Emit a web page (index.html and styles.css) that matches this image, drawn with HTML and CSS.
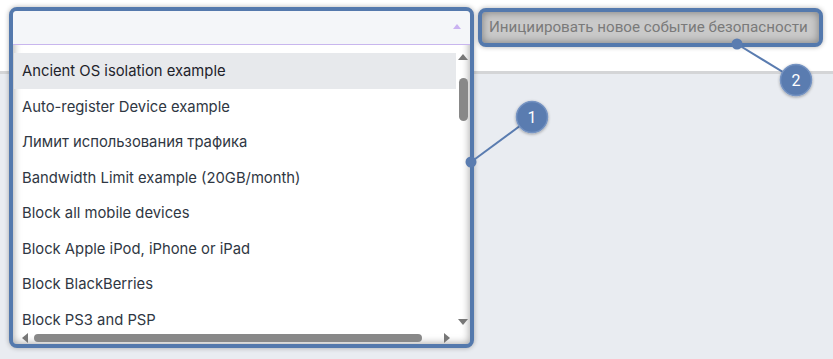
FILE: index.html
```html
<!DOCTYPE html>
<html lang="ru">
<head>
  <meta charset="UTF-8" />
  <title>Security events</title>
  <link rel="stylesheet" href="styles.css">
</head>
<body>
  <div class="page">
    <!-- Верхняя полоса -->
    <div class="band"></div>

    <!-- Выпадающий список политик -->
    <div class="dropdown highlight">
      <div class="dd-head">
        <span class="dd-caret"></span>
      </div>
      <div class="dd-body">
        <div class="dd-main">
          <ul class="dd-list">
            <li class="active">Ancient OS isolation example</li>
            <li>Auto-register Device example</li>
            <li>Лимит использования трафика</li>
            <li>Bandwidth Limit example (20GB/month)</li>
            <li>Block all mobile devices</li>
            <li>Block Apple iPod, iPhone or iPad</li>
            <li>Block BlackBerries</li>
            <li>Block PS3 and PSP</li>
          </ul>
          <div class="vscroll">
            <span class="arr up"></span>
            <span class="vthumb"></span>
            <span class="arr down"></span>
          </div>
        </div>
        <div class="hscroll">
          <span class="arr left"></span>
          <span class="hthumb"></span>
          <span class="arr right"></span>
        </div>
      </div>
    </div>

    <!-- Кнопка -->
    <div class="trigger highlight">Инициировать новое событие безопасности</div>

    <!-- Выноски -->
    <svg class="callouts" width="833" height="359" viewBox="0 0 833 359">
      <defs>
        <filter id="sh" x="-50%" y="-50%" width="200%" height="200%">
          <feDropShadow dx="0" dy="1" stdDeviation="1.5" flood-color="#000" flood-opacity="0.35"/>
        </filter>
      </defs>
      <line x1="471" y1="162" x2="532" y2="117" stroke="#5a7cb0" stroke-width="2"/>
      <circle cx="471" cy="162" r="5.5" fill="#5a7cb0"/>
      <circle cx="532" cy="117" r="15.5" fill="#5a7cb0" stroke="#7593c2" stroke-width="1.5" filter="url(#sh)"/>
      <text x="532" y="123" class="num">1</text>

      <line x1="737" y1="44" x2="796" y2="80" stroke="#5a7cb0" stroke-width="2"/>
      <circle cx="737" cy="44" r="5.5" fill="#5a7cb0"/>
      <circle cx="796" cy="80" r="15.5" fill="#5a7cb0" stroke="#7593c2" stroke-width="1.5" filter="url(#sh)"/>
      <text x="796" y="86" class="num">2</text>
    </svg>
  </div>
</body>
</html>
```

FILE: styles.css
```css
body, html {
  margin: 0;
  padding: 0;
  background: #e9ecf1;
  font-family: 'Inter', 'Noto Sans', sans-serif;
  overflow: hidden;
}

.page {
  position: relative;
  width: 833px;
  height: 359px;
}

.band {
  height: 71px;
  background: #ffffff;
  border-bottom: 3px solid #d4d5d7;
}

/* Рамка подсветки */
.highlight {
  position: absolute;
  border: 4px solid #5479ad;
  border-radius: 8px;
  box-shadow: 0 0 5px rgba(0, 0, 0, 0.3), inset 0 0 8px rgba(0, 0, 0, 0.4);
}

/* Выпадающий список */
.dropdown {
  left: 9px;
  top: 7px;
  width: 457px;
  height: 333px;
  background: #fff;
  display: flex;
  flex-direction: column;
  overflow: hidden;
}

.dd-head {
  height: 33px;
  background: #f4f6f9;
  border-bottom: 1px solid #c8b6ee;
  display: flex;
  justify-content: flex-end;
  align-items: center;
  padding-right: 9px;
  flex-shrink: 0;
}

.dd-caret {
  width: 0;
  height: 0;
  border-left: 4.5px solid transparent;
  border-right: 4.5px solid transparent;
  border-bottom: 5px solid #c9b2f1;
  margin-top: -2px;
}

.dd-body {
  flex: 1;
  display: flex;
  flex-direction: column;
  min-height: 0;
}

.dd-main {
  flex: 1;
  display: flex;
  min-height: 0;
}

.dd-list {
  list-style: none;
  margin: 0;
  padding: 8px 0 0 1px;
  flex: 1;
  overflow: hidden;
}

.dd-list li {
  height: 35.5px;
  line-height: 37px;
  padding-left: 8px;
  font-size: 14.8px;
  color: #2f3743;
  white-space: nowrap;
}

.dd-list li.active {
  background: #e7e9ec;
  color: #1e232b;
}

/* Полосы прокрутки */
.vscroll {
  width: 14px;
  display: flex;
  flex-direction: column;
  align-items: center;
  padding-top: 9px;
  padding-bottom: 6px;
}

.vthumb {
  width: 9px;
  height: 43px;
  border-radius: 4.5px;
  background: #888;
  margin-top: 18px;
}

.vscroll .down {
  margin-top: auto;
}

.hscroll {
  height: 13px;
  display: flex;
  align-items: center;
  padding: 0 20px 0 9px;
  flex-shrink: 0;
}

.hthumb {
  width: 388px;
  height: 8px;
  border-radius: 4px;
  background: #888;
  margin-left: 6px;
}

.hscroll .right {
  margin-left: auto;
}

.arr {
  width: 0;
  height: 0;
  display: block;
}

.arr.up {
  border-left: 5px solid transparent;
  border-right: 5px solid transparent;
  border-bottom: 6px solid #777;
}

.arr.down {
  border-left: 5px solid transparent;
  border-right: 5px solid transparent;
  border-top: 6px solid #777;
}

.arr.left {
  border-top: 5px solid transparent;
  border-bottom: 5px solid transparent;
  border-right: 6px solid #777;
}

.arr.right {
  border-top: 5px solid transparent;
  border-bottom: 5px solid transparent;
  border-left: 6px solid #777;
}

/* Кнопка события */
.trigger {
  left: 478px;
  top: 8px;
  width: 323px;
  height: 31px;
  padding: 0 7px;
  background: #c9c9c9;
  color: #7a7a7a;
  font-family: 'Roboto', 'Liberation Sans', sans-serif;
  font-size: 15.2px;
  line-height: 31px;
  white-space: nowrap;
}

/* Выноски */
.callouts {
  position: absolute;
  left: 0;
  top: 0;
  pointer-events: none;
}

.num {
  fill: #ffffff;
  font-family: 'Roboto', 'Liberation Sans', sans-serif;
  font-size: 16px;
  text-anchor: middle;
}
```
